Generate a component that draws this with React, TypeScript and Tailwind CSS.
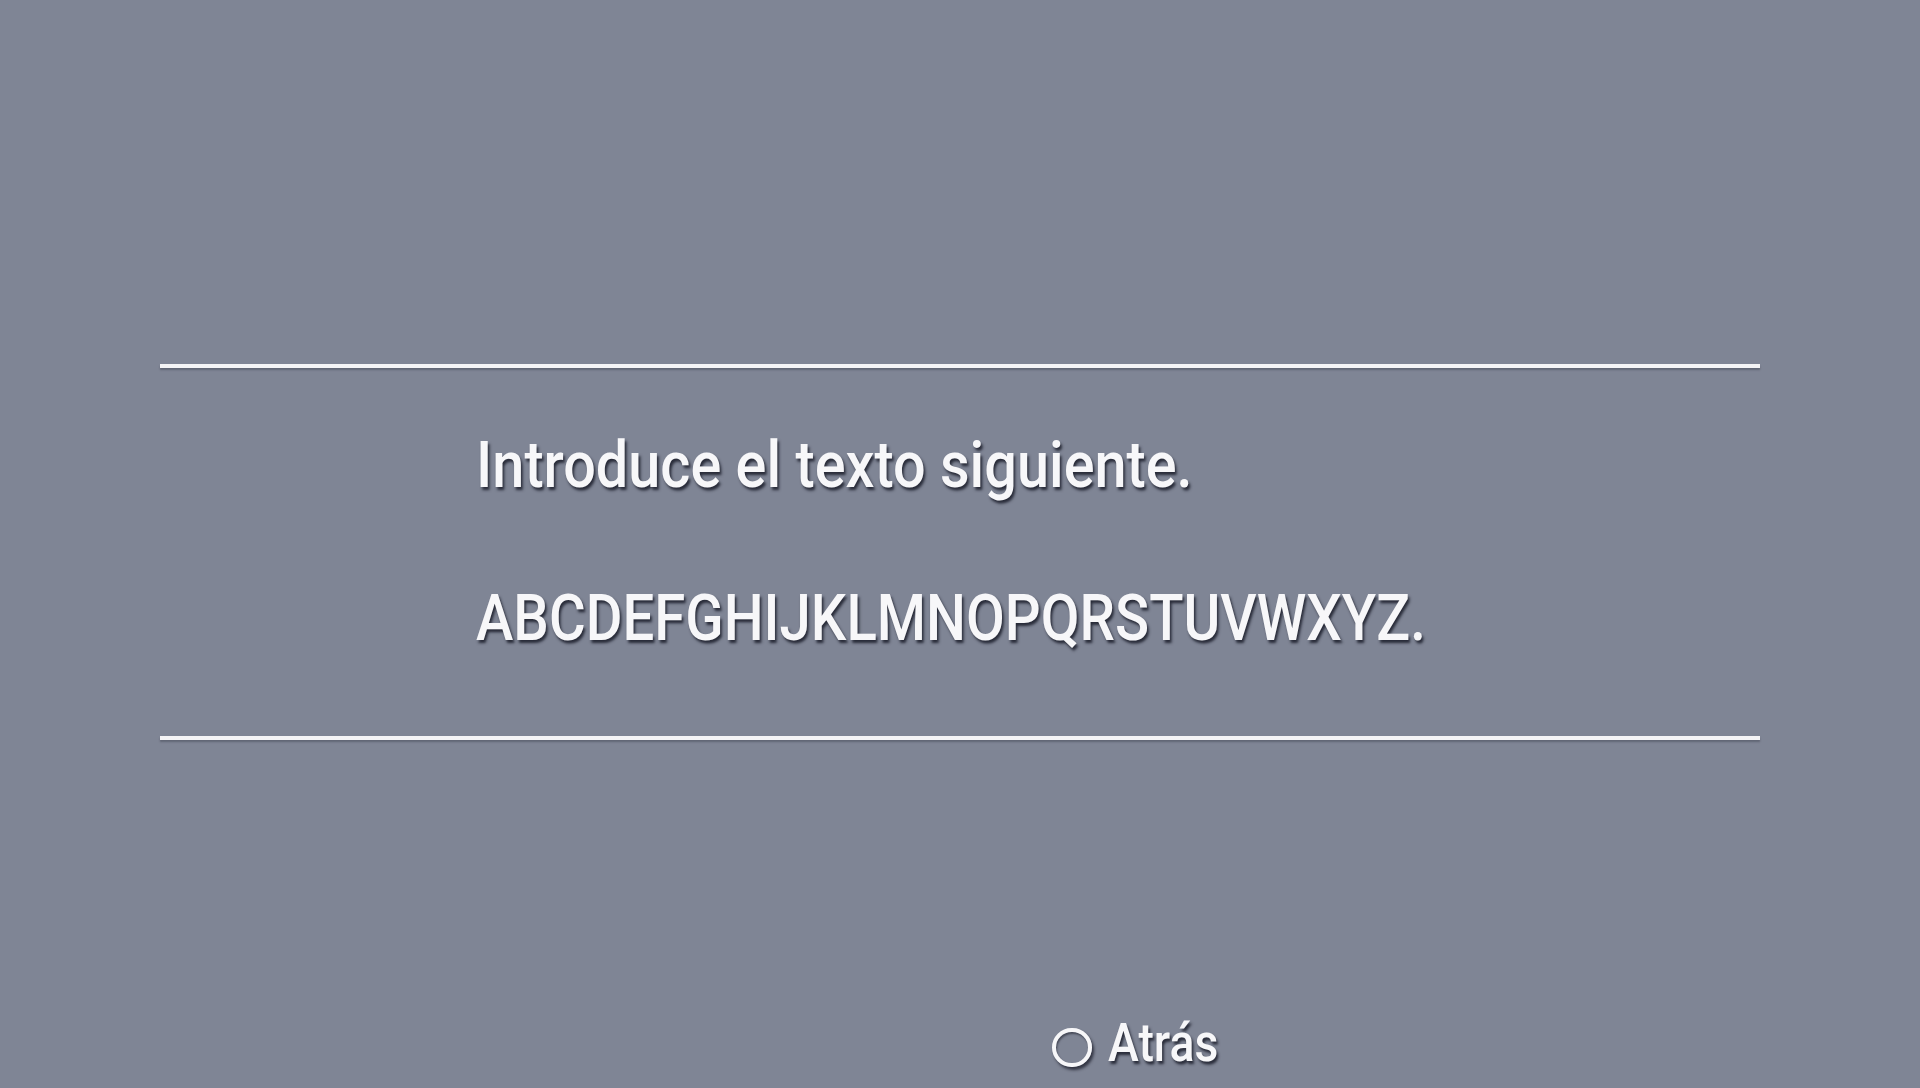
import React from 'react';

// Text-entry prompt screen (console style)
const shadow = '[text-shadow:2px_3px_3px_rgba(25,27,40,0.85)]';

const App: React.FC = () => {
  return (
    <div
      className="w-[1920px] h-[1088px] overflow-hidden bg-[#7f8595] flex flex-col"
      style={{ fontFamily: 'Roboto, "Noto Sans", sans-serif' }}
    >
      {/* Top rule */}
      <div className="mt-[364px] mx-[160px] h-[4px] bg-[#f4f4f6] shadow-[0_2px_2px_rgba(40,42,55,0.35)]" />

      {/* Prompt */}
      <div className={`pl-[476px] pt-[66px] font-medium text-[#f7f7f9] ${shadow}`}>
        <div className="text-[64px] leading-[64px] origin-left scale-x-[0.9] whitespace-nowrap">
          Introduce el texto siguiente.
        </div>
        <div className="mt-[89px] text-[64px] leading-[64px] origin-left scale-x-[0.88] whitespace-nowrap">
          ABCDEFGHIJKLMNOPQRSTUVWXYZ.
        </div>
      </div>

      {/* Bottom rule */}
      <div className="mt-[85px] mx-[160px] h-[4px] bg-[#f4f4f6] shadow-[0_2px_2px_rgba(40,42,55,0.35)]" />

      {/* Back hint */}
      <div className="mt-[276px] pl-[1052px] flex items-start">
        <div className="mt-[12px] w-[40px] h-[39px] rounded-full border-[4px] border-[#f7f7f9] shadow-[2px_3px_3px_rgba(25,27,40,0.75),inset_1px_2px_2px_rgba(25,27,40,0.55)]" />
        <div
          className={`ml-[16px] text-[54px] leading-[54px] font-medium text-[#f7f7f9] origin-left scale-x-[0.86] whitespace-nowrap ${shadow}`}
        >
          Atrás
        </div>
      </div>
    </div>
  );
};

export default App;
